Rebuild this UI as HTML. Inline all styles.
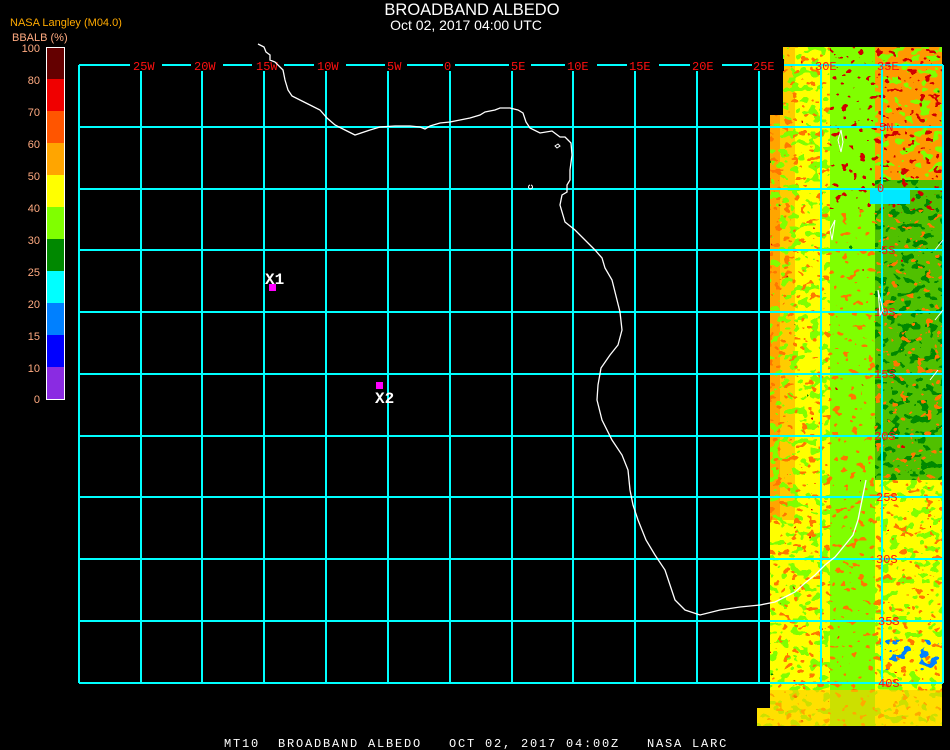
<!DOCTYPE html>
<html><head><meta charset="utf-8"><style>
html,body{margin:0;padding:0;background:#000;}
body{width:950px;height:750px;overflow:hidden;position:relative;font-family:"Liberation Mono","DejaVu Sans Mono",monospace;}
svg{position:absolute;left:0;top:0}
</style></head><body>
<svg width="950" height="750" viewBox="0 0 950 750" xmlns="http://www.w3.org/2000/svg">
<defs>
<filter id="n1" x="0" y="0" width="100%" height="100%">
<feTurbulence type="fractalNoise" baseFrequency="0.12 0.16" numOctaves="2" seed="3"/>
<feComponentTransfer><feFuncA type="discrete" tableValues="0 0 0 0 1 1"/></feComponentTransfer>
<feComposite in="SourceGraphic" operator="in"/>
</filter>
<filter id="n2" x="0" y="0" width="100%" height="100%">
<feTurbulence type="fractalNoise" baseFrequency="0.12" numOctaves="2" seed="8"/>
<feComponentTransfer><feFuncA type="discrete" tableValues="0 0 0 0 0 1"/></feComponentTransfer>
<feComposite in="SourceGraphic" operator="in"/>
</filter>
<filter id="n3" x="0" y="0" width="100%" height="100%">
<feTurbulence type="fractalNoise" baseFrequency="0.1 0.13" numOctaves="2" seed="15"/>
<feComponentTransfer><feFuncA type="discrete" tableValues="0 0 0 1 1"/></feComponentTransfer>
<feComposite in="SourceGraphic" operator="in"/>
</filter>
<filter id="n4" x="0" y="0" width="100%" height="100%">
<feTurbulence type="fractalNoise" baseFrequency="0.09" numOctaves="2" seed="22"/>
<feComponentTransfer><feFuncA type="discrete" tableValues="0 0 0 0 0 0 1"/></feComponentTransfer>
<feComposite in="SourceGraphic" operator="in"/>
</filter>
<clipPath id="dc"><path d="M795 47H942V726H770V708H757V726H770V460H770V115H783V47Z"/></clipPath>
</defs>

<!-- data region -->
<g clip-path="url(#dc)">
<rect x="750" y="40" width="200" height="700" fill="#ffff00"/>
<rect x="830" y="40" width="45" height="700" fill="#80ff00"/>
<rect x="875" y="180" width="70" height="300" fill="#50c000"/>
<rect x="875" y="40" width="70" height="140" fill="#ff9900"/>
<rect x="770" y="40" width="25" height="480" fill="#ffa500"/>
<rect x="780" y="40" width="15" height="480" fill="#ffcc00"/>
<rect x="750" y="440" width="200" height="300" fill="#9fff00" filter="url(#n3)"/>
<rect x="750" y="40" width="200" height="700" fill="#80ff00" filter="url(#n3)"/>
<rect x="875" y="180" width="70" height="300" fill="#008800" filter="url(#n3)"/>
<rect x="750" y="40" width="200" height="700" fill="#ff7700" filter="url(#n1)"/>
<rect x="750" y="40" width="200" height="700" fill="#e00000" filter="url(#n2)"/>
<rect x="830" y="40" width="115" height="170" fill="#d00000" filter="url(#n1)"/>
<rect x="750" y="40" width="200" height="700" fill="#008800" filter="url(#n4)"/>
<rect x="770" y="400" width="100" height="160" fill="#7a0000" filter="url(#n4)"/>
<rect x="870" y="480" width="72" height="140" fill="#00ffff" filter="url(#n4)"/>
<rect x="870" y="190" width="40" height="14" fill="#00e8ff"/>
<rect x="880" y="640" width="60" height="30" fill="#0080ff" filter="url(#n3)"/>
<rect x="757" y="690" width="190" height="40" fill="#ffcc00" opacity="0.6"/>
</g>

<!-- grid -->
<g stroke="#00ffff" stroke-width="1.6" fill="none" shape-rendering="crispEdges">
<path d="M79 65H943M79 127H943M79 189H943M79 250H943M79 312H943M79 374H943M79 436H943M79 497H943M79 559H943M79 621H943M79 683H943"/>
<path d="M79 65V683M141 65V683M202 65V683M264 65V683M326 65V683M388 65V683M450 65V683M512 65V683M573 65V683M635 65V683M697 65V683M759 65V683M821 65V683M882 65V683M943 65V683"/>
</g>

<!-- lon labels -->
<g font-family="Liberation Mono,DejaVu Sans Mono,monospace" font-size="12" fill="#ff1010">
<g fill="#000"><rect x="130" y="59" width="32" height="12"/><rect x="191" y="59" width="32" height="12"/><rect x="252" y="59" width="32" height="12"/><rect x="314" y="59" width="32" height="12"/><rect x="385" y="59" width="22" height="12"/><rect x="443" y="59" width="12" height="12"/><rect x="509" y="59" width="22" height="12"/><rect x="565" y="59" width="32" height="12"/><rect x="627" y="59" width="32" height="12"/><rect x="690" y="59" width="32" height="12"/><rect x="752" y="59" width="32" height="12"/></g>
<text x="133" y="70">25W</text><text x="194" y="70">20W</text><text x="256" y="70">15W</text><text x="317" y="70">10W</text><text x="387" y="70">5W</text><text x="444" y="70">0</text><text x="511" y="70">5E</text><text x="567" y="70">10E</text><text x="629" y="70">15E</text><text x="692" y="70">20E</text><text x="753" y="70">25E</text><text x="815" y="70">30E</text><text x="877" y="70">35E</text>
<text x="879" y="131">5N</text><text x="877" y="192">0</text><text x="881" y="254">5S</text><text x="874" y="316">10S</text><text x="874" y="378">15S</text><text x="874" y="440">20S</text><text x="876" y="501">25S</text><text x="876" y="563">30S</text><text x="878" y="625">35S</text><text x="878" y="687">40S</text>
</g>

<!-- coast -->
<path fill="none" stroke="#fff" stroke-width="1.3" d="M258 44L264 47L266 52L270 55L270 60L275 62L283 70L285 80L288 90L292 96L300 100L310 105L320 110L327 118L335 125L345 130L355 135L370 130L380 127L395 126L410 126L420 127L425 129L430 126L440 123L450 122L460 120L470 118L480 115L485 112L495 110L500 108L510 108L518 110L523 113L526 122L530 128L540 133L552 131L560 137L565 137L568 140L571 143L572 155L570 170L570 180L567 185L567 192L562 195L560 205L565 222L575 230L585 240L595 250L602 258L605 268L612 280L616 296L620 312L622 330L618 345L610 355L601 368L598 385L597 400L602 420L612 440L622 455L628 470L630 490L633 505L638 520L646 540L655 555L665 570L670 585L675 600L685 610L700 615L720 610L740 607L760 605L775 602L785 597L795 592L805 583L815 575L825 565L835 557L845 545L853 535L858 520L862 500L866 480"/>
<path fill="none" stroke="#fff" stroke-width="1" d="M555 146l3 -2 2 2 -3 2z M530 185a2 2 0 1 0 1 0"/>
<path fill="none" stroke="#fff" stroke-width="1" d="M838 140l3 -10 2 12 -2 10z M830 230l5 -10 -3 20z M878 290l5 20 -3 5z M935 250l8 -10M935 320l8 -10M930 380l8 -10"/>

<!-- markers -->
<rect x="269" y="284" width="7" height="7" fill="#ff00ff"/>
<rect x="376" y="382" width="7" height="7" fill="#ff00ff"/>
<g font-family="Liberation Mono,DejaVu Sans Mono,monospace" font-size="16" font-weight="bold" fill="#fff">
<text x="265" y="284">X1</text><text x="375" y="403">X2</text>
</g>

<!-- colorbar -->
<g>
<rect x="46" y="47" width="19" height="32" fill="#640000"/>
<rect x="46" y="79" width="19" height="32" fill="#f00000"/>
<rect x="46" y="111" width="19" height="32" fill="#ff5500"/>
<rect x="46" y="143" width="19" height="32" fill="#ffa500"/>
<rect x="46" y="175" width="19" height="32" fill="#ffff00"/>
<rect x="46" y="207" width="19" height="32" fill="#80ff00"/>
<rect x="46" y="239" width="19" height="32" fill="#008800"/>
<rect x="46" y="271" width="19" height="32" fill="#00ffff"/>
<rect x="46" y="303" width="19" height="32" fill="#0080ff"/>
<rect x="46" y="335" width="19" height="32" fill="#0000ff"/>
<rect x="46" y="367" width="19" height="32" fill="#8a2be2"/>
<rect x="46.5" y="47.5" width="18" height="352" fill="none" stroke="#fff" stroke-width="1"/>
</g>
<g font-family="Liberation Sans,sans-serif" font-size="11" fill="#ffaa80" text-anchor="end">
<text x="40" y="52">100</text><text x="40" y="84">80</text><text x="40" y="116">70</text><text x="40" y="148">60</text><text x="40" y="180">50</text><text x="40" y="212">40</text><text x="40" y="244">30</text><text x="40" y="276">25</text><text x="40" y="308">20</text><text x="40" y="340">15</text><text x="40" y="372">10</text><text x="40" y="403">0</text>
</g>
<text x="10" y="26" font-family="Liberation Sans,sans-serif" font-size="11" fill="#ffaa00">NASA Langley (M04.0)</text>
<text x="12" y="41" font-family="Liberation Sans,sans-serif" font-size="11" fill="#ffaa80">BBALB (%)</text>

<!-- titles -->
<text x="472" y="15" text-anchor="middle" font-family="Liberation Sans,sans-serif" font-size="16.5" fill="#fff">BROADBAND ALBEDO</text>
<text x="466" y="30" text-anchor="middle" font-family="Liberation Sans,sans-serif" font-size="14" fill="#fff">Oct 02, 2017 04:00 UTC</text>
<text x="224" y="747" font-family="Liberation Mono,DejaVu Sans Mono,monospace" font-size="12" letter-spacing="1.8" fill="#fff" xml:space="preserve">MT10  BROADBAND ALBEDO   OCT 02, 2017 04:00Z   NASA LARC</text>
</svg>
</body></html>
